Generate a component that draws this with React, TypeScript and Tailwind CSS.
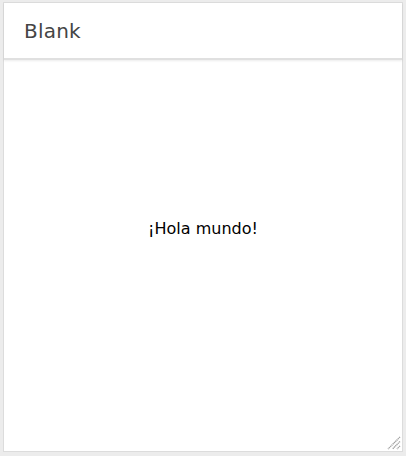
export default function App() {
  return (
    <div className="w-[406px] h-[456px] bg-[#ececec] pt-[2px] pl-[3px] pr-[3px] pb-[4px] font-['DejaVu_Sans',sans-serif]">
      <div className="relative flex flex-col h-full bg-white border border-[#dcdcdc]">
        {/* Заголовок */}
        <div className="h-[57px] shrink-0 flex items-center px-[20px] border-b-2 border-[#e0e0e0] shadow-[0_1px_2px_rgba(0,0,0,0.08)]">
          <span className="text-[20px] text-[#454545] tracking-[0.2px]">Blank</span>
        </div>
        {/* Содержимое */}
        <div className="flex-1 flex items-center justify-center pb-[54px] mt-[1px]">
          <p className="text-[16px] text-black">¡Hola mundo!</p>
        </div>
        {/* Уголок изменения размера */}
        <svg className="absolute right-[1px] bottom-[1px]" width="14" height="14" viewBox="0 0 14 14">
          <path d="M13 1 L1 13 M13 5.5 L5.5 13 M13 10 L10 13" stroke="#a0a0a0" strokeWidth="1.4" strokeDasharray="1.2 0.6" />
        </svg>
      </div>
    </div>
  )
}
